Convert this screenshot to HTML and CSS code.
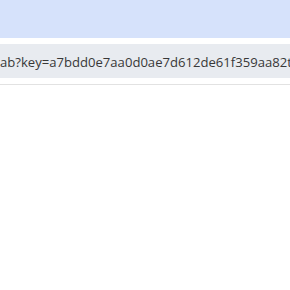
FILE: index.html
```html
<!DOCTYPE html>
<html>
<head>
<meta charset="utf-8">
<link rel="stylesheet" href="styles.css">
</head>
<body>
<div class="top"></div>
<div class="gap"></div>
<div class="urlbar"><span class="url">ab?key=a7bdd0e7aa0d0ae7d612de61f359aa82t</span></div>
<div class="divider"></div>
</body>
</html>
```
FILE: styles.css
```css
html, body { margin: 0; padding: 0; background: #fff; overflow: hidden; }
body { width: 290px; height: 290px; }
.top { height: 38px; background: #d6e2fb; }
.gap { height: 6px; background: #fff; }
.urlbar { height: 34px; background: #e8ebf0; display: flex; align-items: center; overflow: hidden; white-space: nowrap; }
.url { font-family: "Open Sans", "Noto Sans", sans-serif; font-size: 13.1px; color: #383838; margin-top: 1px; }
.divider { margin-top: 6px; height: 1px; background: #e2e2e2; }
```
